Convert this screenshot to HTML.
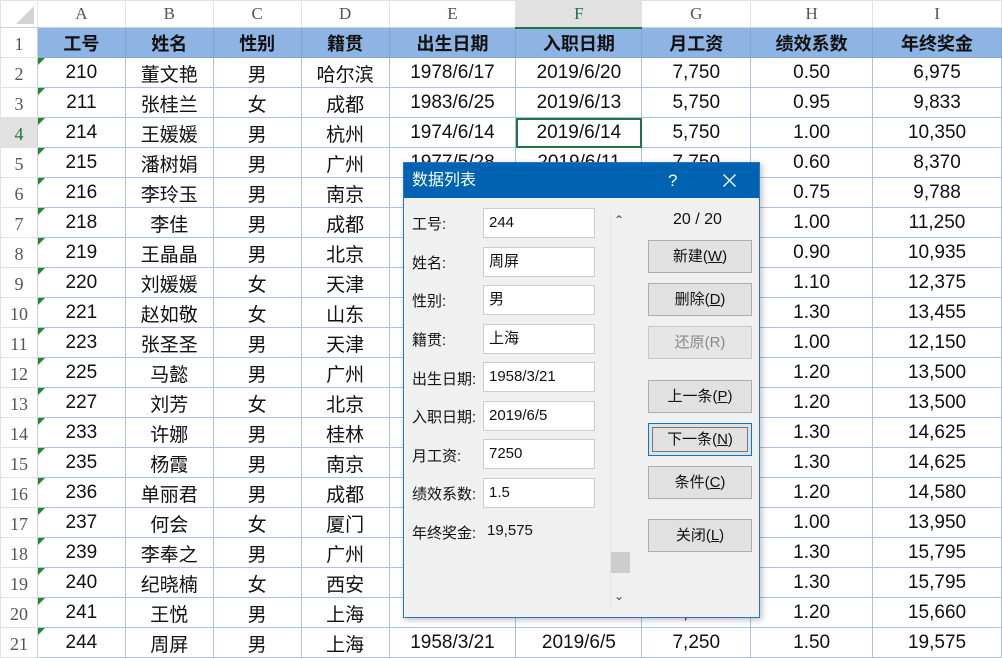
<!DOCTYPE html>
<html><head><meta charset="utf-8"><style>
*{margin:0;padding:0;box-sizing:border-box}
body{width:1002px;height:657px;overflow:hidden;background:#fff;font-family:"Liberation Sans","Noto Sans CJK SC",sans-serif;position:relative}
table{border-collapse:collapse;table-layout:fixed;position:absolute;left:0;top:0}
td{height:30px;border:1px solid #aac1e5;text-align:center;font-size:19px;color:#111;white-space:nowrap;overflow:hidden;position:relative;padding-top:1px}
tr.ch td{height:27px;background:#fff;border:1px solid #e2e2e2;border-bottom:1px solid #d0d0d0;font-family:"Liberation Serif",serif;font-size:17px;color:#555;padding-top:0}
td.rn{background:#fff;border:1px solid #e2e2e2;border-right:1px solid #d0d0d0;font-family:"Liberation Serif",serif;font-size:18px;color:#555;padding-top:4px}
tr.h td:not(.rn){background:#8db4e2;font-weight:bold;font-size:18px;border-color:#7ea6d8}
td.g::before{content:"";position:absolute;left:0;top:0;border-left:7px solid #1e8a2e;border-bottom:7px solid transparent}
.sel{outline:2px solid #217346;outline-offset:-2px}
.dlg{position:absolute;left:403px;top:162px;width:357px;height:456px;background:#f0f0f0;border:1px solid #2a73c0;box-shadow:2px 2px 6px rgba(0,0,0,.25)}
.tb{height:35px;background:#0063b1;color:#fff;font-size:16px;line-height:35px;padding-left:8px;position:relative}
.lb{position:absolute;left:8px;font-size:15px;color:#111}
.in{position:absolute;left:79px;width:112px;height:30px;background:#fff;border:1px solid #ccc;font-size:15px;line-height:28px;padding-left:5px;color:#111}
.bt{position:absolute;left:244px;width:104px;height:33px;background:#e1e1e1;border:1px solid #adadad;font-size:15px;text-align:center;line-height:31px;color:#111}
u{text-decoration:underline}
</style></head><body>
<table>
<colgroup><col style="width:37px"><col style="width:88px"><col style="width:88px"><col style="width:88px"><col style="width:88px"><col style="width:127px"><col style="width:126px"><col style="width:109px"><col style="width:122px"><col style="width:129px"></colgroup>
<tr class="ch"><td style="background:#fff;position:relative"><div style="position:absolute;right:3px;bottom:3px;border-left:18px solid transparent;border-bottom:18px solid #d4d4d4"></div></td><td>A</td><td>B</td><td>C</td><td>D</td><td>E</td><td style="background:#e1e1e1;color:#217346;border-bottom:2px solid #217346">F</td><td>G</td><td>H</td><td>I</td></tr>
<tr class="h"><td class="rn">1</td><td>工号</td><td>姓名</td><td>性别</td><td>籍贯</td><td>出生日期</td><td>入职日期</td><td>月工资</td><td>绩效系数</td><td>年终奖金</td></tr>
<tr><td class="rn">2</td><td class="g">210</td><td>董文艳</td><td>男</td><td>哈尔滨</td><td>1978/6/17</td><td>2019/6/20</td><td>7,750</td><td>0.50</td><td>6,975</td></tr>
<tr><td class="rn">3</td><td class="g">211</td><td>张桂兰</td><td>女</td><td>成都</td><td>1983/6/25</td><td>2019/6/13</td><td>5,750</td><td>0.95</td><td>9,833</td></tr>
<tr><td class="rn" style="background:#e1e1e1;color:#217346">4</td><td class="g">214</td><td>王媛媛</td><td>男</td><td>杭州</td><td>1974/6/14</td><td class="sel">2019/6/14</td><td>5,750</td><td>1.00</td><td>10,350</td></tr>
<tr><td class="rn">5</td><td class="g">215</td><td>潘树娟</td><td>男</td><td>广州</td><td>1977/5/28</td><td>2019/6/11</td><td>7,750</td><td>0.60</td><td>8,370</td></tr>
<tr><td class="rn">6</td><td class="g">216</td><td>李玲玉</td><td>男</td><td>南京</td><td>1979/3/12</td><td>2019/6/10</td><td>7,750</td><td>0.75</td><td>9,788</td></tr>
<tr><td class="rn">7</td><td class="g">218</td><td>李佳</td><td>男</td><td>成都</td><td>1980/2/11</td><td>2019/6/9</td><td>7,500</td><td>1.00</td><td>11,250</td></tr>
<tr><td class="rn">8</td><td class="g">219</td><td>王晶晶</td><td>男</td><td>北京</td><td>1975/4/20</td><td>2019/6/8</td><td>8,100</td><td>0.90</td><td>10,935</td></tr>
<tr><td class="rn">9</td><td class="g">220</td><td>刘媛媛</td><td>女</td><td>天津</td><td>1976/1/5</td><td>2019/6/7</td><td>7,500</td><td>1.10</td><td>12,375</td></tr>
<tr><td class="rn">10</td><td class="g">221</td><td>赵如敬</td><td>女</td><td>山东</td><td>1972/9/9</td><td>2019/6/6</td><td>6,900</td><td>1.30</td><td>13,455</td></tr>
<tr><td class="rn">11</td><td class="g">223</td><td>张圣圣</td><td>男</td><td>天津</td><td>1971/7/7</td><td>2019/6/6</td><td>8,100</td><td>1.00</td><td>12,150</td></tr>
<tr><td class="rn">12</td><td class="g">225</td><td>马懿</td><td>男</td><td>广州</td><td>1970/8/8</td><td>2019/6/6</td><td>7,500</td><td>1.20</td><td>13,500</td></tr>
<tr><td class="rn">13</td><td class="g">227</td><td>刘芳</td><td>女</td><td>北京</td><td>1969/3/3</td><td>2019/6/6</td><td>7,500</td><td>1.20</td><td>13,500</td></tr>
<tr><td class="rn">14</td><td class="g">233</td><td>许娜</td><td>男</td><td>桂林</td><td>1968/2/2</td><td>2019/6/6</td><td>7,500</td><td>1.30</td><td>14,625</td></tr>
<tr><td class="rn">15</td><td class="g">235</td><td>杨霞</td><td>男</td><td>南京</td><td>1967/1/1</td><td>2019/6/6</td><td>7,500</td><td>1.30</td><td>14,625</td></tr>
<tr><td class="rn">16</td><td class="g">236</td><td>单丽君</td><td>男</td><td>成都</td><td>1966/5/5</td><td>2019/6/6</td><td>8,100</td><td>1.20</td><td>14,580</td></tr>
<tr><td class="rn">17</td><td class="g">237</td><td>何会</td><td>女</td><td>厦门</td><td>1965/6/6</td><td>2019/6/6</td><td>9,300</td><td>1.00</td><td>13,950</td></tr>
<tr><td class="rn">18</td><td class="g">239</td><td>李奉之</td><td>男</td><td>广州</td><td>1964/4/4</td><td>2019/6/6</td><td>8,100</td><td>1.30</td><td>15,795</td></tr>
<tr><td class="rn">19</td><td class="g">240</td><td>纪晓楠</td><td>女</td><td>西安</td><td>1963/3/3</td><td>2019/6/6</td><td>8,100</td><td>1.30</td><td>15,795</td></tr>
<tr><td class="rn">20</td><td class="g">241</td><td>王悦</td><td>男</td><td>上海</td><td>1962/2/2</td><td>2019/6/6</td><td>8,700</td><td>1.20</td><td>15,660</td></tr>
<tr><td class="rn">21</td><td class="g">244</td><td>周屏</td><td>男</td><td>上海</td><td>1958/3/21</td><td>2019/6/5</td><td>7,250</td><td>1.50</td><td>19,575</td></tr>
</table>

<div class="dlg">
<div class="tb">数据列表<span style="position:absolute;left:264px;font-size:17px">?</span><svg style="position:absolute;left:319px;top:11px" width="13" height="13" viewBox="0 0 13 13"><path d="M0.5 0.5L12.5 12.5M12.5 0.5L0.5 12.5" stroke="#fff" stroke-width="1.3" fill="none"/></svg></div>
<div class="lb" style="top:50px">工号:</div><div class="in" style="top:45px">244</div>
<div class="lb" style="top:89px">姓名:</div><div class="in" style="top:84px">周屏</div>
<div class="lb" style="top:127px">性别:</div><div class="in" style="top:122px">男</div>
<div class="lb" style="top:166px">籍贯:</div><div class="in" style="top:161px">上海</div>
<div class="lb" style="top:205px">出生日期:</div><div class="in" style="top:199px">1958/3/21</div>
<div class="lb" style="top:243px">入职日期:</div><div class="in" style="top:238px">2019/6/5</div>
<div class="lb" style="top:282px">月工资:</div><div class="in" style="top:276px">7250</div>
<div class="lb" style="top:320px">绩效系数:</div><div class="in" style="top:315px">1.5</div>
<div class="lb" style="top:359px">年终奖金:</div><div class="lb" style="top:359px;left:83px">19,575</div>
<div style="position:absolute;left:206px;top:48px;width:16px;height:400px;border-left:1px solid #e4e4e4"></div>
<div style="position:absolute;left:210px;top:50px;font-size:12px;color:#444">&#8963;</div>
<div style="position:absolute;left:207px;top:389px;width:19px;height:21px;background:#cdcdcd"></div>
<div style="position:absolute;left:210px;top:426px;font-size:12px;color:#444">&#8964;</div>
<div style="position:absolute;left:269px;top:48px;font-size:16px;color:#111">20 / 20</div>
<div class="bt" style="top:77px">新建(<u>W</u>)</div>
<div class="bt" style="top:120px">删除(<u>D</u>)</div>
<div class="bt" style="top:163px;color:#888;border-color:#c8c8c8;background:#e6e6e6">还原(R)</div>
<div class="bt" style="top:217px">上一条(<u>P</u>)</div>
<div class="bt" style="top:260px;border:1px solid #0078d7;padding:3px"><div style="border:1px solid #777;height:25px;line-height:23px">下一条(<u>N</u>)</div></div>
<div class="bt" style="top:303px">条件(<u>C</u>)</div>
<div class="bt" style="top:356px">关闭(<u>L</u>)</div>
</div>
</body></html>
